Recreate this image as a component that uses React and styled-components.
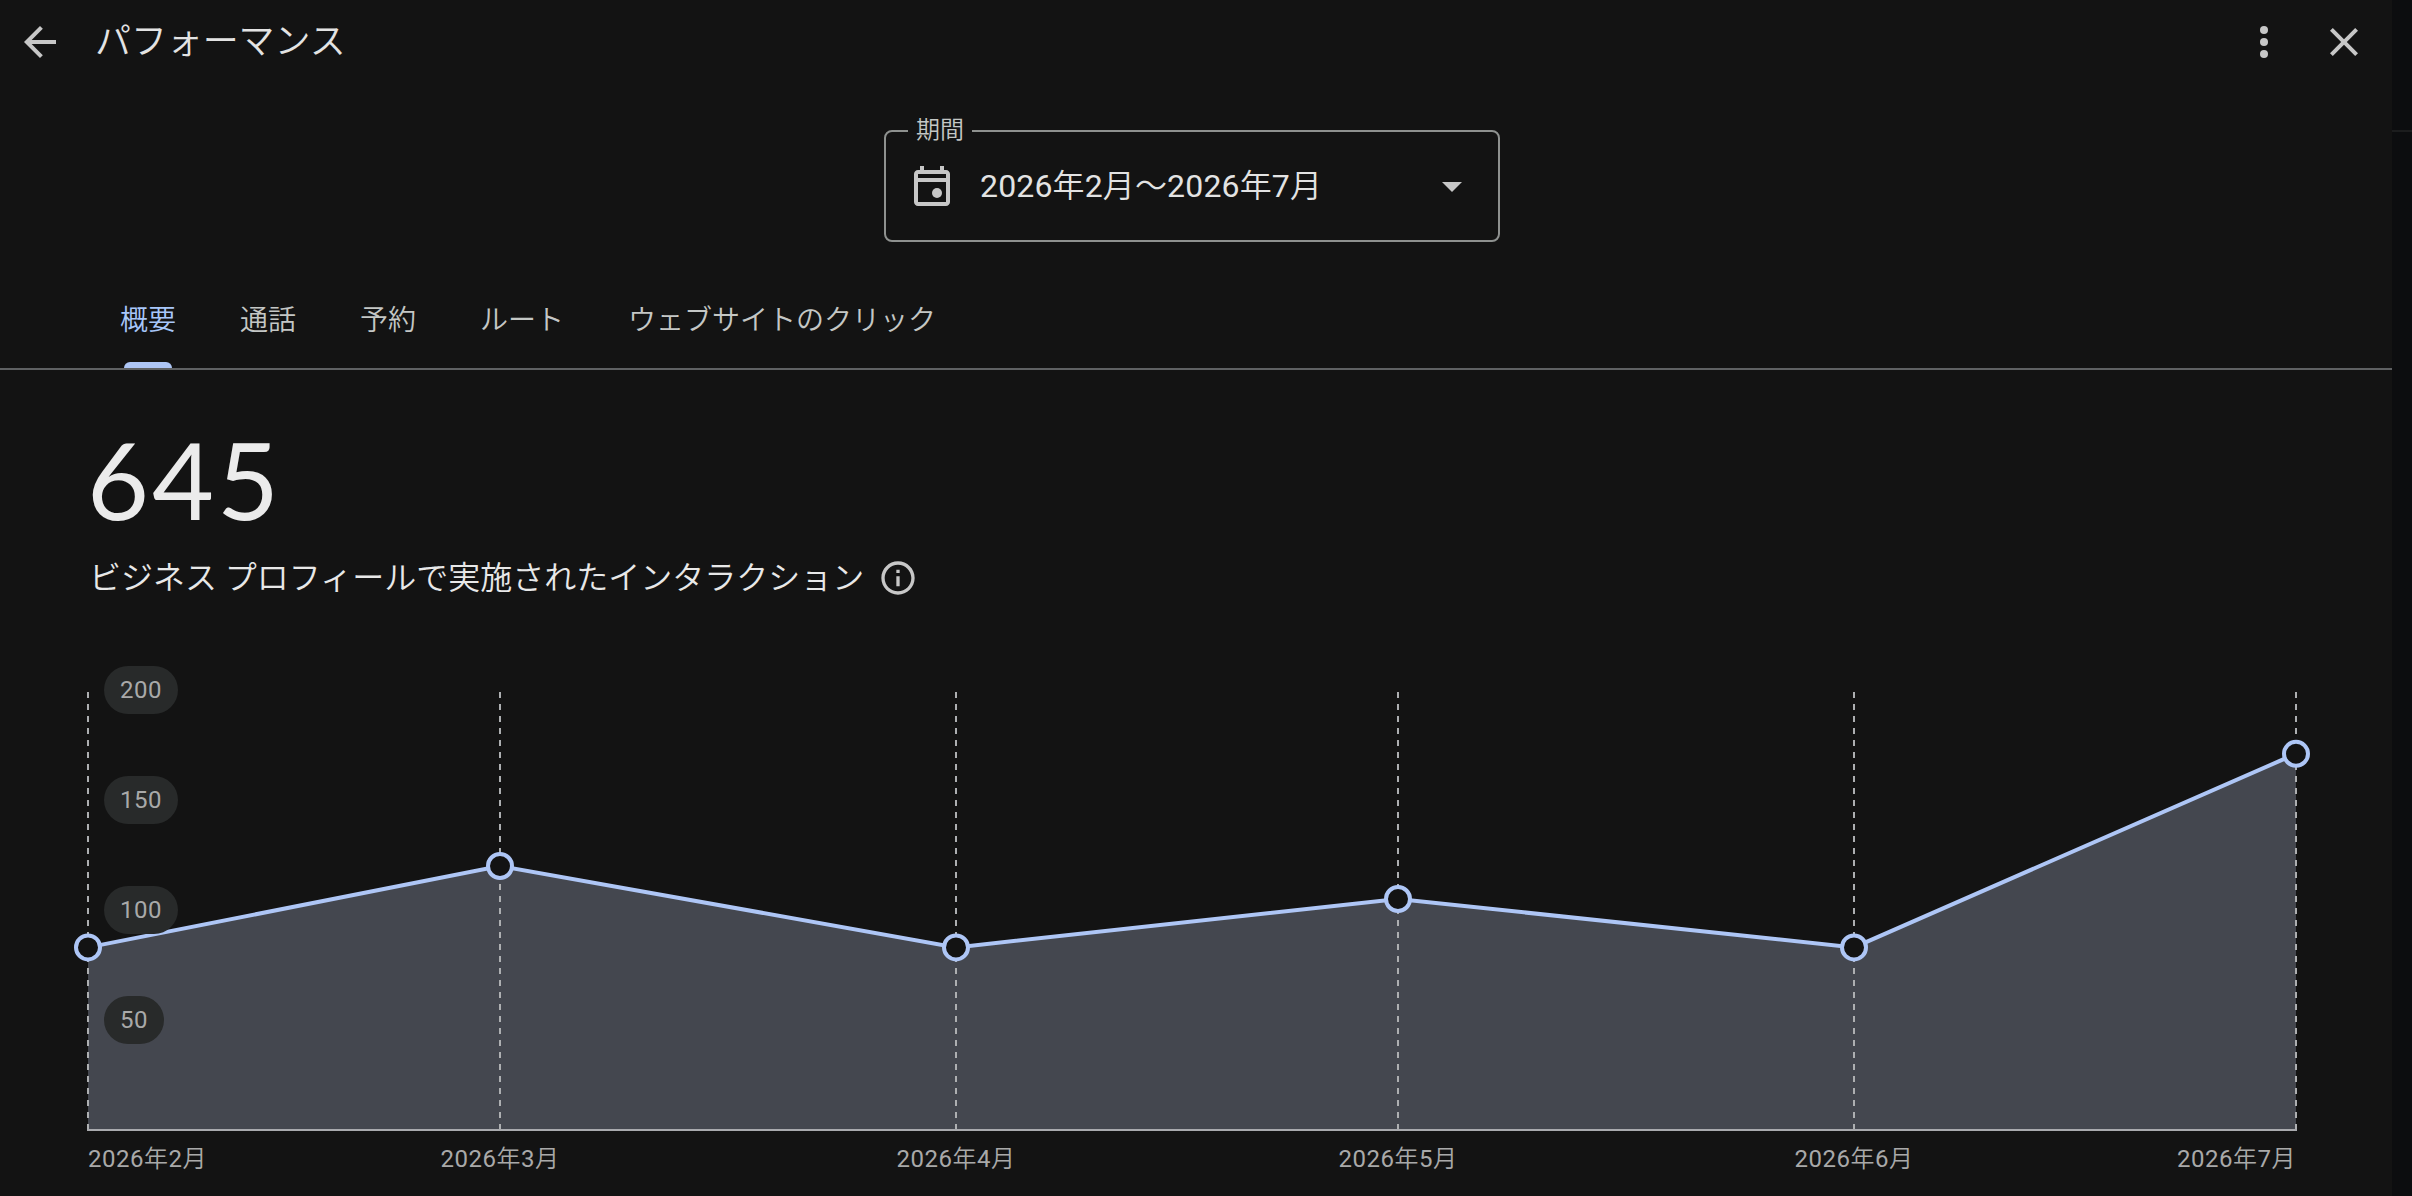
import React from "react";
import styled, { createGlobalStyle } from "styled-components";

const GlobalStyle = createGlobalStyle`
  * {
    box-sizing: border-box;
  }
  body {
    margin: 0;
    background: #0c0d0f;
    font-family: Roboto, "Noto Sans CJK JP DemiLight", "Noto Sans CJK JP", sans-serif;
    font-weight: 350;
    overflow: hidden;
  }
`;

const Page = styled.div`
  display: flex;
  height: 1196px;
`;

const Panel = styled.main`
  display: flex;
  flex-direction: column;
  width: 2392px;
  background: #131313;
  color: #e3e3e3;
`;

const Backdrop = styled.div`
  flex: 1;
  height: 132px;
  border-bottom: 2px solid #1c1d1e;
`;

const Header = styled.header`
  display: flex;
  align-items: center;
  height: 84px;
  padding: 0 24px 0 16px;
`;

const Title = styled.h1`
  flex: 1;
  margin: 0 0 0 31px;
  font-size: 36px;
  font-weight: 350;
  line-height: 48px;
  padding-bottom: 1px;
  letter-spacing: -0.1px;
`;

const IconButton = styled.button`
  display: flex;
  padding: 0;
  border: none;
  background: none;
  color: #c7c7c7;
  & + & {
    margin-left: 32px;
  }
`;

const Icon = styled.svg`
  width: ${(p) => p.$size || 48}px;
  height: ${(p) => p.$size || 48}px;
  flex-shrink: 0;
  fill: #c7c7c7;
`;

const Period = styled.fieldset`
  display: flex;
  align-items: center;
  width: 616px;
  height: 123px;
  margin: 35px 0 0 884px;
  padding: 19px 22px 0;
  border: 2px solid #8e918f;
  border-radius: 8px;
  legend {
    height: 24px;
    padding: 0 8px;
    font-size: 24px;
    line-height: 22px;
    color: #c4c7c5;
  }
`;

const PeriodValue = styled.span`
  flex: 1;
  margin-left: 24px;
  font-size: 32px;
  font-weight: 400;
  line-height: 48px;
  letter-spacing: 0.15px;
`;

const Tabs = styled.nav`
  display: flex;
  height: 128px;
  padding: 37px 0 0 88px;
  border-bottom: 2px solid #5f6163;
`;

const Tab = styled.div`
  display: flex;
  flex-direction: column;
  justify-content: space-between;
  padding: 0 32px;
  font-size: 28px;
  line-height: 83px;
  color: ${(p) => (p.$active ? "#a8c7fa" : "#c4c7c5")};
  &::after {
    content: "";
    height: 6px;
    margin: 0 4px;
    border-radius: 6px 6px 0 0;
    background: ${(p) => (p.$active ? "#aec6f6" : "transparent")};
  }
`;

const Total = styled.div`
  margin: 45px 0 3px 87px;
  font-family: Lato, sans-serif;
  font-size: 107px;
  font-weight: 400;
  line-height: 128px;
  letter-spacing: 3px;
  color: #ebebeb;
`;

const Caption = styled.div`
  display: flex;
  align-items: center;
  gap: 14px;
  height: 64px;
  margin-left: 89px;
  font-size: 32px;
  color: #e8e8e8;
  span {
    padding-bottom: 6px;
  }
`;

const Chart = styled.svg`
  display: block;
  width: 2392px;
  height: 546px;
  margin-top: 40px;
  text {
    font-size: 24px;
    font-weight: 400;
    letter-spacing: 0.5px;
    fill: #a9a9a9;
  }
`;

const tabs = ["概要", "通話", "予約", "ルート", "ウェブサイトのクリック"];

const months = [
  { label: "2026年2月", day: 0, value: 83 },
  { label: "2026年3月", day: 28, value: 120 },
  { label: "2026年4月", day: 59, value: 83 },
  { label: "2026年5月", day: 89, value: 105 },
  { label: "2026年6月", day: 120, value: 83 },
  { label: "2026年7月", day: 150, value: 171 },
];

const ticks = [200, 150, 100, 50];

const LEFT = 88;
const RIGHT = 2296;
const BASE = 480;

const xOf = (day) => Math.round(LEFT + (day * (RIGHT - LEFT)) / 150);
const yOf = (value) => BASE - value * 2.2;

const anchorOf = (i) => {
  if (i === 0) return "start";
  return i === months.length - 1 ? "end" : "middle";
};

const InteractionsChart = () => {
  const line = months.map((m) => `${xOf(m.day)},${yOf(m.value)}`).join(" ");
  return (
    <Chart viewBox="0 0 2392 546">
      <polygon
        points={`${LEFT},${BASE} ${line} ${RIGHT},${BASE}`}
        fill="#44474f"
      />
      {months.map((m) => (
        <line
          key={m.label}
          x1={xOf(m.day)}
          x2={xOf(m.day)}
          y1={BASE}
          y2={yOf(200)}
          stroke="#adafb1"
          strokeWidth="2"
          strokeDasharray="6 6"
        />
      ))}
      <path d={`M${LEFT - 1} ${BASE}H${RIGHT + 1}`} stroke="#a9aaae" strokeWidth="2" />
      <polyline points={line} fill="none" stroke="#aec6f6" strokeWidth="4" />
      {months.map((m) => (
        <circle
          key={m.label}
          cx={xOf(m.day)}
          cy={yOf(m.value)}
          r="12"
          fill="#131313"
          stroke="#aec6f6"
          strokeWidth="4"
        />
      ))}
      {ticks.map((t) => (
        <g key={t}>
          <rect
            x="104"
            y={yOf(t) - 24}
            width={32 + 14 * String(t).length}
            height="48"
            rx="24"
            fill="#282a2a"
          />
          <text x="120" y={yOf(t) + 8}>
            {t}
          </text>
        </g>
      ))}
      {months.map((m, i) => (
        <text key={m.label} x={xOf(m.day)} y="517" textAnchor={anchorOf(i)}>
          {m.label}
        </text>
      ))}
    </Chart>
  );
};

const App = () => {
  return (
    <>
      <GlobalStyle />
      <Page>
        <Panel>
          <Header>
            <IconButton aria-label="戻る">
              <Icon viewBox="0 0 24 24">
                <path d="M20 11H7.83l5.59-5.59L12 4l-8 8 8 8 1.41-1.41L7.83 13H20v-2z" />
              </Icon>
            </IconButton>
            <Title>パフォーマンス</Title>
            <IconButton aria-label="その他">
              <Icon viewBox="0 0 24 24">
                <circle cx="12" cy="6" r="2" />
                <circle cx="12" cy="12" r="2" />
                <circle cx="12" cy="18" r="2" />
              </Icon>
            </IconButton>
            <IconButton aria-label="閉じる">
              <Icon viewBox="0 0 24 24">
                <path d="M19 6.41 17.59 5 12 10.59 6.41 5 5 6.41 10.59 12 5 17.59 6.41 19 12 13.41 17.59 19 19 17.59 13.41 12z" />
              </Icon>
            </IconButton>
          </Header>
          <Period>
            <legend>期間</legend>
            <Icon viewBox="0 0 24 24">
              <path d="M19 4h-1V2h-2v2H8V2H6v2H5c-1.1 0-2 .9-2 2v14c0 1.1.9 2 2 2h14c1.1 0 2-.9 2-2V6c0-1.1-.9-2-2-2zm0 16H5V10h14v10zm0-12H5V6h14v2z" />
              <circle cx="14.5" cy="15.5" r="2.5" />
            </Icon>
            <PeriodValue>2026年2月〜2026年7月</PeriodValue>
            <Icon viewBox="0 0 24 24">
              <path d="M7 10l5 5 5-5z" />
            </Icon>
          </Period>
          <Tabs>
            {tabs.map((name, i) => (
              <Tab key={name} $active={i === 0}>
                {name}
              </Tab>
            ))}
          </Tabs>
          <Total>645</Total>
          <Caption>
            <span>ビジネス プロフィールで実施されたインタラクション</span>
            <Icon $size={40} viewBox="0 0 24 24">
              <path d="M11 7h2v2h-2zm0 4h2v6h-2zm1-9C6.48 2 2 6.48 2 12s4.48 10 10 10 10-4.48 10-10S17.52 2 12 2zm0 18c-4.41 0-8-3.59-8-8s3.59-8 8-8 8 3.59 8 8-3.59 8-8 8z" />
            </Icon>
          </Caption>
          <InteractionsChart />
        </Panel>
        <Backdrop />
      </Page>
    </>
  );
};

export default App;
